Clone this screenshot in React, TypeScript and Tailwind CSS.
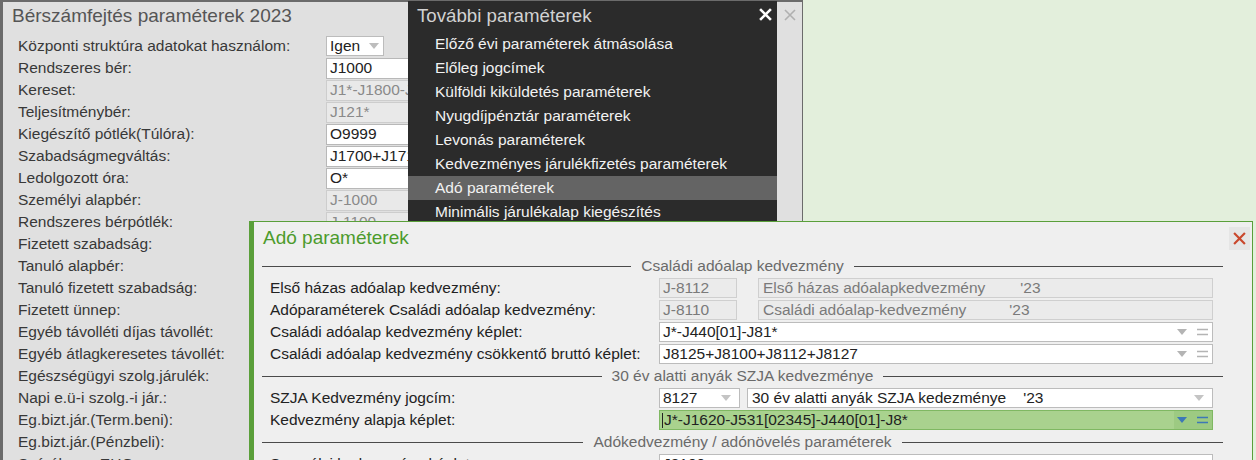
import React from "react";

type Kind = "on" | "off" | "select";

const leftRows: { label: string; value?: string; kind?: Kind }[] = [
  { label: "Központi struktúra adatokat használom:", value: "Igen", kind: "select" },
  { label: "Rendszeres bér:", value: "J1000", kind: "on" },
  { label: "Kereset:", value: "J1*-J1800-J1810*", kind: "off" },
  { label: "Teljesítménybér:", value: "J121*", kind: "off" },
  { label: "Kiegészítő pótlék(Túlóra):", value: "O9999", kind: "on" },
  { label: "Szabadságmegváltás:", value: "J1700+J1710", kind: "on" },
  { label: "Ledolgozott óra:", value: "O*", kind: "on" },
  { label: "Személyi alapbér:", value: "J-1000", kind: "off" },
  { label: "Rendszeres bérpótlék:", value: "J-1100", kind: "off" },
  { label: "Fizetett szabadság:" },
  { label: "Tanuló alapbér:" },
  { label: "Tanuló fizetett szabadság:" },
  { label: "Fizetett ünnep:" },
  { label: "Egyéb távolléti díjas távollét:" },
  { label: "Egyéb átlagkeresetes távollét:" },
  { label: "Egészségügyi szolg.járulék:" },
  { label: "Napi e.ü-i szolg.-i jár.:" },
  { label: "Eg.bizt.jár.(Term.beni):" },
  { label: "Eg.bizt.jár.(Pénzbeli):" },
  { label: "Szúrólapos EHO:" },
];

const menuItems = [
  "Előző évi paraméterek átmásolása",
  "Előleg jogcímek",
  "Külföldi kiküldetés paraméterek",
  "Nyugdíjpénztár paraméterek",
  "Levonás paraméterek",
  "Kedvezményes járulékfizetés paraméterek",
  "Adó paraméterek",
  "Minimális járulékalap kiegészítés",
];

function Caret({ color = "#b4b4b4" }: { color?: string }) {
  return (
    <svg width="10" height="6" viewBox="0 0 10 6">
      <path d="M0 0h10L5 6z" fill={color} />
    </svg>
  );
}

function Equals({ color = "#b4b4b4" }: { color?: string }) {
  return (
    <svg width="11" height="8" viewBox="0 0 11 8">
      <path d="M0 1.5h11M0 6.5h11" stroke={color} strokeWidth="1.6" />
    </svg>
  );
}

function Cross({ color, size, width }: { color: string; size: number; width: number }) {
  return (
    <svg width={size} height={size} viewBox="0 0 12 12">
      <path d="M1 1l10 10M11 1L1 11" stroke={color} strokeWidth={width} />
    </svg>
  );
}

function Separator({ title }: { title: string }) {
  return (
    <div className="flex h-[22px] items-center gap-[10px]">
      <div className="h-px flex-1 bg-[#4a4a4a]" />
      <span className="text-[#6a6a6a]">{title}</span>
      <div className="h-px flex-1 bg-[#4a4a4a]" />
    </div>
  );
}

function Field({
  children,
  kind,
  className = "",
}: {
  children: React.ReactNode;
  kind: "on" | "off";
  className?: string;
}) {
  const look =
    kind === "on"
      ? "bg-white border-[#bcbcbc] text-[#222]"
      : "bg-[#ebebeb] border-[#cfcfcf] text-[#7a7a7a]";
  return (
    <div
      className={`flex h-[20px] items-center overflow-hidden whitespace-nowrap border pl-[3px] ${look} ${className}`}
    >
      {children}
    </div>
  );
}

function Formula({ value, active = false }: { value: string; active?: boolean }) {
  if (active) {
    return (
      <div className="flex h-[20px] flex-1 items-center overflow-hidden whitespace-nowrap border border-[#7fb862] bg-[#a9d28e] text-[#222]">
        <div className="flex flex-1 items-center pl-[2px]">
          <span className="mr-px h-[15px] w-px bg-[#222]" />
          {value}
        </div>
        <div className="flex h-full items-center gap-[10px] bg-[#9dca82] pl-[3px] pr-[4px]">
          <Caret color="#3d78b6" />
          <Equals color="#3d78b6" />
        </div>
      </div>
    );
  }
  return (
    <Field kind="on" className="flex-1">
      <span className="flex-1">{value}</span>
      <div className="flex items-center gap-[10px] pr-[4px]">
        <Caret />
        <Equals />
      </div>
    </Field>
  );
}

function AdoRow({ label, children }: { label: string; children: React.ReactNode }) {
  return (
    <div className="flex h-[22px] items-center pl-[8px] pr-[10px]">
      <div className="w-[389px] whitespace-nowrap text-[#222]">{label}</div>
      {children}
    </div>
  );
}

export default function App() {
  return (
    <div className="relative h-[460px] w-[1256px] overflow-hidden bg-[#e3efdc] font-['Liberation_Sans',Arial,sans-serif] text-[15.5px]">
      {/* base window */}
      <div className="absolute left-0 top-0 h-[460px] w-[803px] border-l-[3px] border-r border-t-2 border-[#6b6b6b] bg-[#e0e0e0]">
        <div className="flex h-[33px] items-start justify-between pl-[9px] pr-[6px] pt-[3px]">
          <span className="text-[19px] leading-[22px] text-[#555]">Bérszámfejtés paraméterek 2023</span>
          <div className="pt-[4px]">
            <Cross color="#b0b0b0" size={12} width={1.6} />
          </div>
        </div>
        <div className="flex flex-col">
          {leftRows.map((r) => (
            <div key={r.label} className="flex h-[22px] items-center">
              <div className="w-[323px] whitespace-nowrap pl-[15px] text-[#383838]">{r.label}</div>
              {r.kind === "select" && (
                <div className="flex h-[20px] w-[58px] items-center justify-between border border-[#bcbcbc] bg-white pl-[3px] pr-[4px] text-[#222]">
                  {r.value}
                  <Caret color="#bdbdbd" />
                </div>
              )}
              {(r.kind === "on" || r.kind === "off") && (
                <div
                  className={`flex h-[21px] w-[200px] items-center overflow-hidden whitespace-nowrap border pl-[3px] ${
                    r.kind === "on"
                      ? "border-[#b8b8b8] bg-white text-[#222]"
                      : "border-[#cdcdcd] bg-[#e9e9e9] text-[#8a8a8a]"
                  }`}
                >
                  {r.value}
                </div>
              )}
            </div>
          ))}
        </div>
      </div>

      {/* dropdown menu */}
      <div className="absolute left-[408px] top-px h-[220px] w-[369px] bg-[#2b2b2b]">
        <div className="flex h-[31px] items-center justify-between pl-[9px] pr-[5px]">
          <span className="text-[18.7px] text-[#d2d2d2]">További paraméterek</span>
          <div className="-mt-[5px]">
            <Cross color="#ffffff" size={13} width={2.4} />
          </div>
        </div>
        {menuItems.map((m) => (
          <div
            key={m}
            className={`flex h-[24px] items-center pl-[27px] text-[#f2f2f2] ${
              m === "Adó paraméterek" ? "bg-[#646464]" : ""
            }`}
          >
            {m}
          </div>
        ))}
      </div>

      {/* Adó paraméterek window */}
      <div className="absolute left-[249px] top-[221px] h-[260px] w-[1004px] border-l-[5px] border-r border-t border-[#5a9f3a] bg-[#efefef]">
        <div className="flex h-[33px] items-center justify-between pl-[9px] pr-[2px]">
          <span className="text-[19px] text-[#4c9b2c]">Adó paraméterek</span>
          <div className="flex h-[23px] w-[21px] items-center justify-center bg-[#e5e5e5]">
            <Cross color="#c9472c" size={13} width={2} />
          </div>
        </div>
        <div className="flex flex-col pl-[8px] pr-[29px]">
          <Separator title="Családi adóalap kedvezmény" />
          <AdoRow label="Első házas adóalap kedvezmény:">
            <Field kind="off" className="w-[78px]">J-8112</Field>
            <Field kind="off" className="ml-[21px] flex-1 pl-[4px] text-[#6e6e6e]">
              Első házas adóalapkedvezmény<span className="ml-[35px]">'23</span>
            </Field>
          </AdoRow>
          <AdoRow label="Adóparaméterek Családi adóalap kedvezmény:">
            <Field kind="off" className="w-[78px]">J-8110</Field>
            <Field kind="off" className="ml-[21px] flex-1 pl-[4px] text-[#6e6e6e]">
              Családi adóalap-kedvezmény<span className="ml-[43px]">'23</span>
            </Field>
          </AdoRow>
          <AdoRow label="Családi adóalap kedvezmény képlet:">
            <Formula value="J*-J440[01]-J81*" />
          </AdoRow>
          <AdoRow label="Családi adóalap kedvezmény csökkentő bruttó képlet:">
            <Formula value="J8125+J8100+J8112+J8127" />
          </AdoRow>
          <Separator title="30 év alatti anyák SZJA kedvezménye" />
          <AdoRow label="SZJA Kedvezmény jogcím:">
            <Field kind="on" className="w-[81px] justify-between pr-[8px]">
              8127
              <Caret color="#c4c4c4" />
            </Field>
            <Field kind="on" className="ml-[7px] flex-1 justify-between pl-[4px] pr-[8px]">
              <span>
                30 év alatti anyák SZJA kedezménye<span className="ml-[17px]">'23</span>
              </span>
              <Caret color="#c4c4c4" />
            </Field>
          </AdoRow>
          <AdoRow label="Kedvezmény alapja képlet:">
            <Formula value="J*-J1620-J531[02345]-J440[01]-J8*" active />
          </AdoRow>
          <Separator title="Adókedvezmény / adónövelés paraméterek" />
          <AdoRow label="Személyi kedvezmény képlet:">
            <Formula value="J8100" />
          </AdoRow>
        </div>
      </div>
    </div>
  );
}
